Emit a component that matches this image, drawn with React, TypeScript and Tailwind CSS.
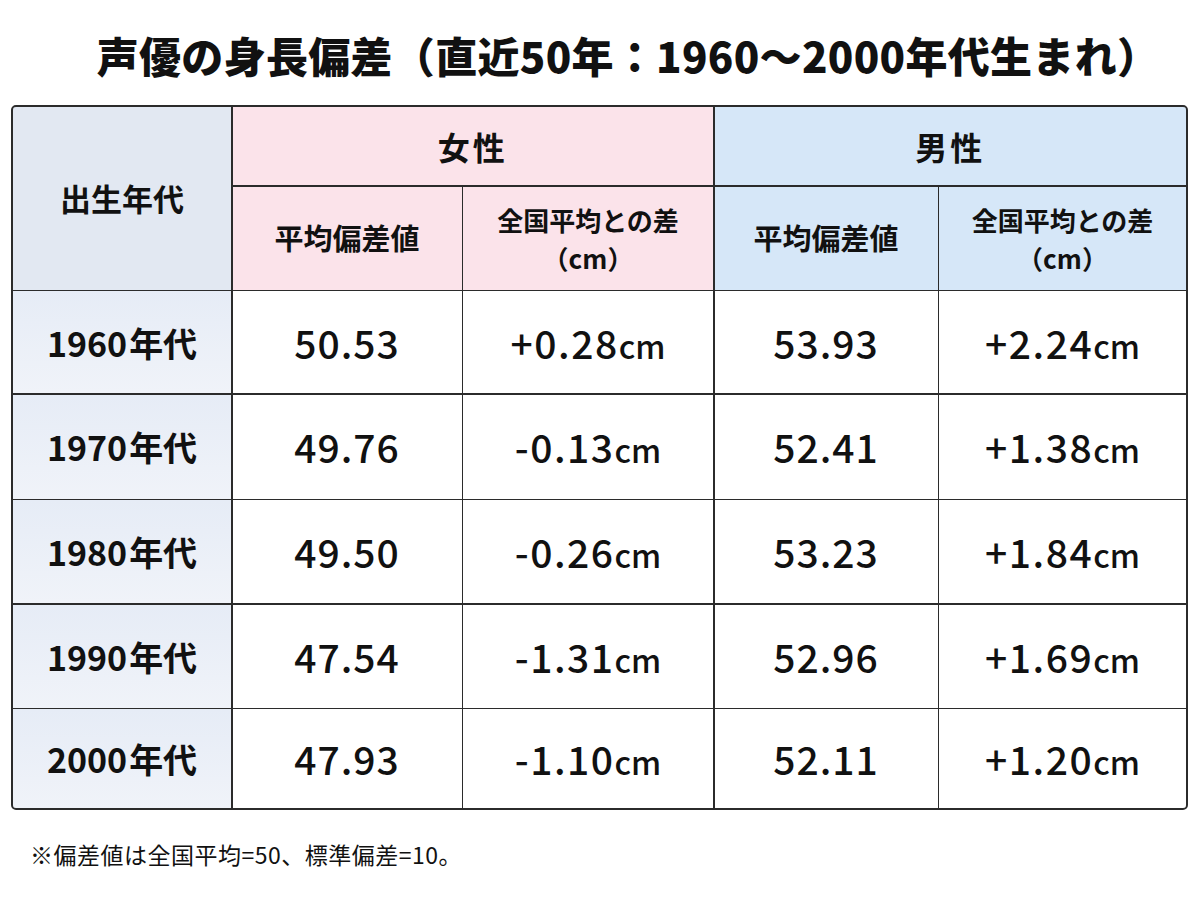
import React from "react";

const rows = [
  { y: "1960", f1: "50.53", f2: "+0.28", m1: "53.93", m2: "+2.24" },
  { y: "1970", f1: "49.76", f2: "-0.13", m1: "52.41", m2: "+1.38" },
  { y: "1980", f1: "49.50", f2: "-0.26", m1: "53.23", m2: "+1.84" },
  { y: "1990", f1: "47.54", f2: "-1.31", m1: "52.96", m2: "+1.69" },
  { y: "2000", f1: "47.93", f2: "-1.10", m1: "52.11", m2: "+1.20" },
];

function Diff({ v }: { v: string }) {
  return (
    <span className="inline-flex items-baseline">
      <span className="text-[39px] font-medium tracking-[1.5px]">{v}</span>
      <span className="text-[32px] font-medium">cm</span>
    </span>
  );
}

export default function App() {
  return (
    <div
      className="w-[1200px] h-[900px] bg-white text-[#111] overflow-hidden"
      style={{ fontFamily: '"Noto Sans CJK JP", "Noto Sans", sans-serif' }}
    >
      <div className="h-[105px] flex items-center justify-center pl-[56px] pt-[4px]">
        <h1 className="text-[42px] font-black tracking-[0.3px] leading-none">
          声優の身長偏差（直近50年：1960〜2000年代生まれ）
        </h1>
      </div>
      <div className="ml-[11px] w-[1177px] border-2 border-[#2b2b2b] rounded-[5px] overflow-hidden">
        <div className="grid grid-cols-[218px_229px_250px_223px_1fr] grid-rows-[78px_103px_102px_104px_103px_103px_99px] gap-[1.5px] bg-[#2b2b2b]">
          <div className="row-span-2 bg-[#e2e8f2] flex items-center justify-center text-[31px] font-bold">
            出生年代
          </div>
          <div className="col-span-2 bg-[#fbe3ea] flex items-center justify-center text-[32px] font-bold tracking-[3px]">
            女性
          </div>
          <div className="col-span-2 bg-[#d6e7f8] flex items-center justify-center text-[32px] font-bold tracking-[3px]">
            男性
          </div>
          <div className="bg-[#fbe3ea] flex items-center justify-center text-[29px] font-bold">
            平均偏差値
          </div>
          <div className="bg-[#fbe3ea] flex flex-col items-center justify-center text-[26px] font-bold leading-[38px] pt-[2px]">
            <span>全国平均との差</span>
            <span>（cm）</span>
          </div>
          <div className="bg-[#d6e7f8] flex items-center justify-center text-[29px] font-bold">
            平均偏差値
          </div>
          <div className="bg-[#d6e7f8] flex flex-col items-center justify-center text-[26px] font-bold leading-[38px] pt-[2px]">
            <span>全国平均との差</span>
            <span>（cm）</span>
          </div>
          {rows.map((r) => (
            <React.Fragment key={r.y}>
              <div className="bg-gradient-to-b from-[#e6ecf6] to-[#f0f3f9] flex items-center justify-center text-[34px] font-bold">
                <span>{r.y}</span>
                <span className="ml-[2px]">年代</span>
              </div>
              <div className="bg-white flex items-center justify-center text-[39px] font-medium tracking-[1px]">
                {r.f1}
              </div>
              <div className="bg-white flex items-center justify-center">
                <Diff v={r.f2} />
              </div>
              <div className="bg-white flex items-center justify-center text-[39px] font-medium tracking-[1px]">
                {r.m1}
              </div>
              <div className="bg-white flex items-center justify-center">
                <Diff v={r.m2} />
              </div>
            </React.Fragment>
          ))}
        </div>
      </div>
      <div className="mt-[33px] ml-[30px] text-[23px] leading-none tracking-[0.5px]">
        ※偏差値は全国平均=50、標準偏差=10。
      </div>
    </div>
  );
}
